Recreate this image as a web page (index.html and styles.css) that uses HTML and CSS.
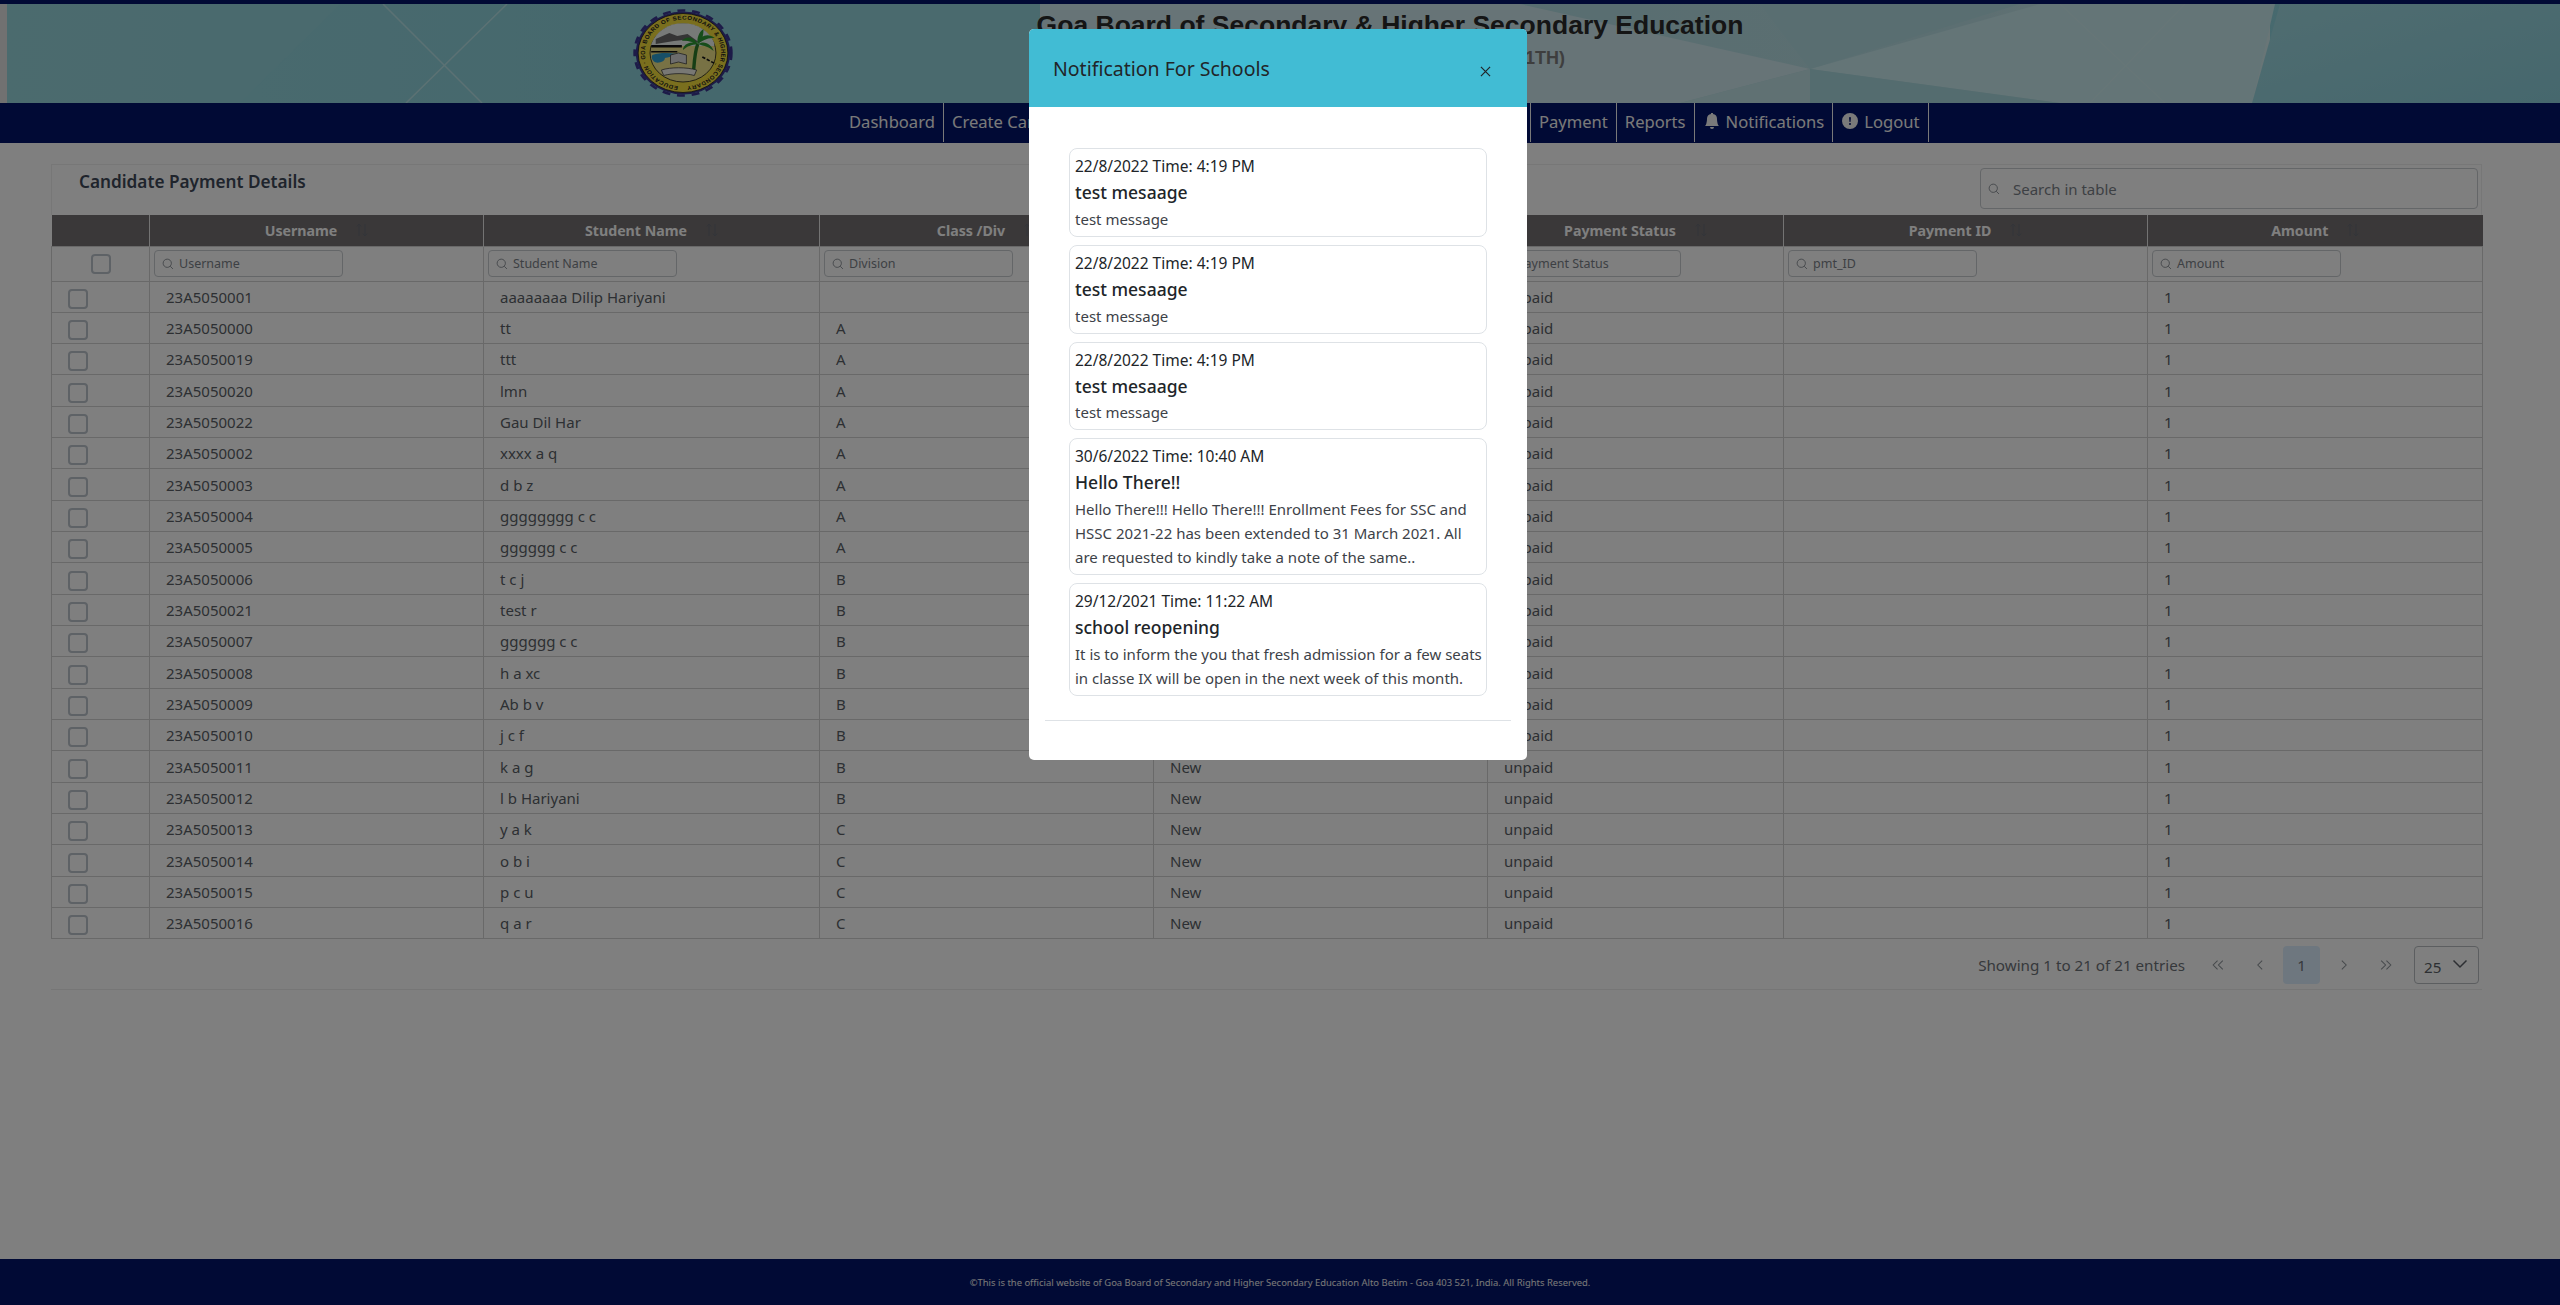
FILE: index.html
```html
<!DOCTYPE html>
<html lang="en">
<head>
<meta charset="utf-8">
<title>Candidate Payment Details</title>
<link rel="stylesheet" href="styles.css">
</head>
<body>
<svg class="defs" aria-hidden="true">
  <symbol id="i-search" viewBox="0 0 16 16"><circle cx="7" cy="7" r="5.5" fill="none" stroke="currentColor" stroke-width="1.1"/><path d="M11 11l3.6 3.6" stroke="currentColor" stroke-width="1.1" fill="none"/></symbol>
  <symbol id="i-sort" viewBox="0 0 12 14"><path d="M3 13V1M3 1L.8 3.4M3 1l2.2 2.4M9 1v12M9 13l-2.2-2.4M9 13l2.2-2.4" stroke="#666a74" stroke-width="1" fill="none"/></symbol>
</svg>
<header class="site-head">
  <svg class="head-bg" viewBox="0 0 2560 99" preserveAspectRatio="none" aria-hidden="true">
    <defs>
      <linearGradient id="g1" x1="0" x2="1" y1="0" y2="0"><stop offset="0" stop-color="#96d6de"/><stop offset=".3" stop-color="#8ad0da"/><stop offset="1" stop-color="#90d4de"/></linearGradient>
      <linearGradient id="g2" x1="0" x2="1" y1="0" y2="0"><stop offset="0" stop-color="#a8dbe0"/><stop offset=".75" stop-color="#b9dee4"/><stop offset="1" stop-color="#d2ecee"/></linearGradient>
      <linearGradient id="g3" x1="0" x2="1" y1="0" y2="1"><stop offset="0" stop-color="#a0dae2"/><stop offset="1" stop-color="#8ccfdb"/></linearGradient>
    </defs>
    <rect width="2560" height="99" fill="url(#g1)"/>
    <polygon points="0,0 340,0 240,99 0,99" fill="#9cd7de" opacity=".35"/>
    <polygon points="790,0 1040,0 1040,99 790,99" fill="#a6dade" opacity=".4"/>
    <rect x="1040" width="1230" height="99" fill="url(#g2)"/>
    <polygon points="1810,65 1520,0 1040,0 1040,99 1680,99" fill="#cfe8ee"/>
    <polygon points="1810,65 2040,0 2275,0 2252,99 2060,99" fill="#c8eaee"/>
    <polygon points="1760,0 2020,0 1810,65" fill="#b2dde2"/>
    <polygon points="1810,65 2060,99 1810,99" fill="#a8d8de"/>
    <polygon points="1810,65 1680,99 1810,99" fill="#c0e2e6"/>
    <polygon points="2280,0 2560,0 2560,99 2252,99" fill="url(#g3)"/>
    <g stroke="#d2eff0" stroke-width="1.5" opacity=".6">
      <line x1="383" y1="0" x2="482" y2="99"/>
      <line x1="507" y1="0" x2="406" y2="99"/>
      <line x1="2060" y1="0" x2="2165" y2="99"/>
      <line x1="2185" y1="0" x2="2090" y2="99"/>
    </g>
    <rect width="7" height="99" fill="#e2e2e2"/>
  </svg>
  <svg class="logo" viewBox="12 0 176 176" preserveAspectRatio="none" aria-hidden="true">
    <defs><path id="ring" d="M100 155A67 67 0 1 1 100.1 155"/></defs>
    <circle cx="100" cy="88" r="83" fill="#3a3690"/>
    <circle cx="100" cy="88" r="85" fill="none" stroke="#3a3690" stroke-width="5" stroke-dasharray="14 12"/>
    <circle cx="100" cy="88" r="79" fill="#f4de3c" stroke="#1b1b1b" stroke-width="1.500"/>
    <circle cx="100" cy="88" r="58" fill="#f0e48a" stroke="#1b1b1b" stroke-width="1.500"/>
    <path d="M45 68A58 58 0 0 1 155 68V74H43Z" fill="#eef4f0"/>
    <path d="M52 60l24-12 14 6 18-4 22 18-30-6-16 2-32 6Z" fill="#6a6a6a"/>
    <path d="M44 72h54v5H44zM44 84h46v3H44z" fill="#141414"/>
    <path d="M46 92c16-6 30-4 44-2-6 6-16 6-22 8 2 6-14 14-20 6-3-4-4-8-2-12Z" fill="#2f9fd0"/>
    <path d="M118 132c2-24 2-44 8-62" stroke="#2f7d2a" stroke-width="6" fill="none"/>
    <path d="M126 70c-10-18-22-14-28-6 8-2 14 0 28 6ZM126 70c-14-8-26 2-26 12 8-8 14-10 26-12ZM126 70c4-18 18-22 30-12-12 0-18 2-30 12ZM126 70c12-8 24 0 28 14-8-8-16-10-28-14ZM126 70c-2-12 2-24 10-30 0 10 0 18-10 30Z" fill="#2f9a34"/>
    <path d="M134 96l24 14" stroke="#141414" stroke-width="3" stroke-dasharray="6 3"/>
    <path d="M78 110l0-18 14-4 14 4 0 18-14-4Z" fill="#d8d8d8" stroke="#444" stroke-width="1.500"/>
    <path d="M62 122c16-6 44-6 62 0l-4 11c-16-5-38-5-54 0Z" fill="#f0f0e8" stroke="#444" stroke-width="1.500"/>
    <text class="logo-text"><textPath href="#ring" startOffset="2%" textLength="405">EDUCATION · GOA BOARD OF SECONDARY &amp; HIGHER SECONDARY</textPath></text>
  </svg>
  <div class="head-text">
    <h1 class="head-title">Goa Board of Secondary &amp; Higher Secondary Education</h1>
    <p class="head-sub">Online Enrollment Portal (9TH &amp; 11TH)</p>
  </div>
</header>
<nav class="main-nav">
  <a class="nav-item">Dashboard</a>
  <a class="nav-item nav-wide">Create Candidate</a>
  <a class="nav-item">Payment</a>
  <a class="nav-item">Reports</a>
  <a class="nav-item"><svg class="nav-ico" viewBox="0 0 16 16"><path d="M8 16a2 2 0 0 0 2-2H6a2 2 0 0 0 2 2Zm.9-15a1 1 0 1 0-1.8 0A5 5 0 0 0 3 6c0 1.1-.5 6-2 7h14c-1.500-1-2-5.900-2-7a5 5 0 0 0-4.100-5Z" fill="currentColor"/></svg>Notifications</a>
  <a class="nav-item"><svg class="nav-ico" viewBox="0 0 16 16"><path d="M16 8A8 8 0 1 1 0 8a8 8 0 0 1 16 0ZM8 4a.9.9 0 0 0-.9 1l.35 3.500a.55.55 0 0 0 1.100 0L8.900 5A.9.9 0 0 0 8 4Zm0 6a1 1 0 1 0 0 2 1 1 0 0 0 0-2Z" fill="currentColor" fill-rule="evenodd"/></svg>Logout</a>
</nav>
<main class="content">
  <section class="panel">
    <div class="toolbar">
      <h2 class="panel-title">Candidate Payment Details</h2>
      <label class="search"><svg class="ico"><use href="#i-search"/></svg><span>Search in table</span></label>
    </div>
    <table class="grid">
      <colgroup><col class="c1"><col class="c2"><col class="c3"><col class="c4"><col class="c5"><col class="c6"><col class="c7"><col class="c8"></colgroup>
      <thead>
        <tr class="head-row">
          <th></th>
          <th><span class="th-in">Username<svg class="sort"><use href="#i-sort"/></svg></span></th>
          <th><span class="th-in">Student Name<svg class="sort"><use href="#i-sort"/></svg></span></th>
          <th><span class="th-in">Class /Div<svg class="sort"><use href="#i-sort"/></svg></span></th>
          <th><span class="th-in">Type<svg class="sort"><use href="#i-sort"/></svg></span></th>
          <th><span class="th-in">Payment Status<svg class="sort"><use href="#i-sort"/></svg></span></th>
          <th><span class="th-in">Payment ID<svg class="sort"><use href="#i-sort"/></svg></span></th>
          <th><span class="th-in">Amount<svg class="sort"><use href="#i-sort"/></svg></span></th>
        </tr>
        <tr class="filter-row">
          <td class="check-head"><span class="check"></span></td>
          <td><label class="filter"><svg class="ico"><use href="#i-search"/></svg>Username</label></td>
          <td><label class="filter"><svg class="ico"><use href="#i-search"/></svg>Student Name</label></td>
          <td><label class="filter"><svg class="ico"><use href="#i-search"/></svg>Division</label></td>
          <td><label class="filter"><svg class="ico"><use href="#i-search"/></svg>Type</label></td>
          <td><label class="filter"><svg class="ico"><use href="#i-search"/></svg>Payment Status</label></td>
          <td><label class="filter"><svg class="ico"><use href="#i-search"/></svg>pmt_ID</label></td>
          <td><label class="filter"><svg class="ico"><use href="#i-search"/></svg>Amount</label></td>
        </tr>
      </thead>
      <tbody>
        <tr><td><span class="check"></span></td><td>23A5050001</td><td>aaaaaaaa Dilip Hariyani</td><td></td><td>New</td><td>unpaid</td><td></td><td>1</td></tr>
        <tr><td><span class="check"></span></td><td>23A5050000</td><td>tt</td><td>A</td><td>New</td><td>unpaid</td><td></td><td>1</td></tr>
        <tr><td><span class="check"></span></td><td>23A5050019</td><td>ttt</td><td>A</td><td>New</td><td>unpaid</td><td></td><td>1</td></tr>
        <tr><td><span class="check"></span></td><td>23A5050020</td><td>lmn</td><td>A</td><td>New</td><td>unpaid</td><td></td><td>1</td></tr>
        <tr><td><span class="check"></span></td><td>23A5050022</td><td>Gau Dil Har</td><td>A</td><td>New</td><td>unpaid</td><td></td><td>1</td></tr>
        <tr><td><span class="check"></span></td><td>23A5050002</td><td>xxxx a q</td><td>A</td><td>New</td><td>unpaid</td><td></td><td>1</td></tr>
        <tr><td><span class="check"></span></td><td>23A5050003</td><td>d b z</td><td>A</td><td>New</td><td>unpaid</td><td></td><td>1</td></tr>
        <tr><td><span class="check"></span></td><td>23A5050004</td><td>gggggggg c c</td><td>A</td><td>New</td><td>unpaid</td><td></td><td>1</td></tr>
        <tr><td><span class="check"></span></td><td>23A5050005</td><td>gggggg c c</td><td>A</td><td>New</td><td>unpaid</td><td></td><td>1</td></tr>
        <tr><td><span class="check"></span></td><td>23A5050006</td><td>t c j</td><td>B</td><td>New</td><td>unpaid</td><td></td><td>1</td></tr>
        <tr><td><span class="check"></span></td><td>23A5050021</td><td>test r</td><td>B</td><td>New</td><td>unpaid</td><td></td><td>1</td></tr>
        <tr><td><span class="check"></span></td><td>23A5050007</td><td>gggggg c c</td><td>B</td><td>New</td><td>unpaid</td><td></td><td>1</td></tr>
        <tr><td><span class="check"></span></td><td>23A5050008</td><td>h a xc</td><td>B</td><td>New</td><td>unpaid</td><td></td><td>1</td></tr>
        <tr><td><span class="check"></span></td><td>23A5050009</td><td>Ab b v</td><td>B</td><td>New</td><td>unpaid</td><td></td><td>1</td></tr>
        <tr><td><span class="check"></span></td><td>23A5050010</td><td>j c f</td><td>B</td><td>New</td><td>unpaid</td><td></td><td>1</td></tr>
        <tr><td><span class="check"></span></td><td>23A5050011</td><td>k a g</td><td>B</td><td>New</td><td>unpaid</td><td></td><td>1</td></tr>
        <tr><td><span class="check"></span></td><td>23A5050012</td><td>l b Hariyani</td><td>B</td><td>New</td><td>unpaid</td><td></td><td>1</td></tr>
        <tr><td><span class="check"></span></td><td>23A5050013</td><td>y a k</td><td>C</td><td>New</td><td>unpaid</td><td></td><td>1</td></tr>
        <tr><td><span class="check"></span></td><td>23A5050014</td><td>o b i</td><td>C</td><td>New</td><td>unpaid</td><td></td><td>1</td></tr>
        <tr><td><span class="check"></span></td><td>23A5050015</td><td>p c u</td><td>C</td><td>New</td><td>unpaid</td><td></td><td>1</td></tr>
        <tr><td><span class="check"></span></td><td>23A5050016</td><td>q a r</td><td>C</td><td>New</td><td>unpaid</td><td></td><td>1</td></tr>
      </tbody>
    </table>
    <div class="pager">
      <span class="pager-info">Showing 1 to 21 of 21 entries</span>
      <a class="page-btn"><svg class="page-ico" viewBox="0 0 16 16"><path d="M7.500 3L2.500 8l5 5M13.500 3l-5 5 5 5"/></svg></a>
      <a class="page-btn"><svg class="page-ico" viewBox="0 0 16 16"><path d="M10.500 3l-5 5 5 5"/></svg></a>
      <a class="page-btn page-on">1</a>
      <a class="page-btn"><svg class="page-ico" viewBox="0 0 16 16"><path d="M5.500 3l5 5-5 5"/></svg></a>
      <a class="page-btn"><svg class="page-ico" viewBox="0 0 16 16"><path d="M2.500 3l5 5-5 5M8.500 3l5 5-5 5"/></svg></a>
      <span class="size"><span class="size-val">25</span><svg class="size-ico" viewBox="0 0 16 10"><path d="M1.500 1.500L8 8l6.500-6.500"/></svg></span>
    </div>
  </section>
</main>
<footer class="site-foot">©This is the official website of Goa Board of Secondary and Higher Secondary Education Alto Betim - Goa 403 521, India. All Rights Reserved.</footer>

<div class="backdrop"></div>
<div class="modal">
  <div class="modal-head">
    <h3 class="modal-title">Notification For Schools</h3>
    <svg class="modal-close" viewBox="0 0 12 12"><path d="M1 1l10 10M11 1L1 11"/></svg>
  </div>
  <div class="modal-body">
    <article class="note"><div class="note-date">22/8/2022 Time: 4:19 PM</div><div class="note-title">test mesaage</div><div class="note-text">test message</div></article>
    <article class="note"><div class="note-date">22/8/2022 Time: 4:19 PM</div><div class="note-title">test mesaage</div><div class="note-text">test message</div></article>
    <article class="note"><div class="note-date">22/8/2022 Time: 4:19 PM</div><div class="note-title">test mesaage</div><div class="note-text">test message</div></article>
    <article class="note"><div class="note-date">30/6/2022 Time: 10:40 AM</div><div class="note-title">Hello There!!</div><div class="note-text">Hello There!!! Hello There!!! Enrollment Fees for SSC and<br>HSSC 2021-22 has been extended to 31 March 2021. All<br>are requested to kindly take a note of the same..</div></article>
    <article class="note"><div class="note-date">29/12/2021 Time: 11:22 AM</div><div class="note-title">school reopening</div><div class="note-text">It is to inform the you that fresh admission for a few seats<br>in classe IX will be open in the next week of this month.</div></article>
  </div>
  <div class="modal-foot"></div>
</div>
</body>
</html>
```
FILE: styles.css
```css
* { box-sizing: border-box; }
html, body { height: 100%; }
body {
  margin: 0;
  display: flex;
  flex-direction: column;
  background: #fff;
  color: #5a5f66;
  font-family: "Noto Sans", "Open Sans", sans-serif;
  font-size: 15px;
  overflow: hidden;
}
.defs { width: 0; height: 0; position: absolute; }

.site-head {
  position: relative;
  height: 103px;
  flex: none;
  border-top: 4px solid #03146a;
  overflow: hidden;
}
.head-bg { position: absolute; left: 0; top: 0; width: 100%; height: 100%; }
.logo { position: absolute; left: 633px; top: 5px; width: 100px; height: 88px; }
.logo-text { font: 700 11px "Liberation Sans", sans-serif; fill: #1b1b1b; }
.head-text {
  position: relative;
  margin-left: 1035px;
  width: 710px;
  text-align: center;
}
.head-title {
  margin: 6px 0 0;
  font: 700 26.500px/30px "Liberation Sans", Arial, sans-serif;
  color: #2a2a2a;
  white-space: nowrap;
}
.head-sub {
  margin: 7px 0 0;
  padding-right: 180px;
  text-align: right;
  font: 700 18px/22px "Liberation Sans", Arial, sans-serif;
  color: #7d7d7d;
  white-space: nowrap;
}

.main-nav {
  flex: none;
  height: 40px;
  display: flex;
  padding-left: 841px;
  background: #03146a;
}
.nav-item {
  display: flex;
  align-items: center;
  height: 39px;
  padding: 0 8px 3px;
  border-right: 1px solid #f3f3f3;
  color: #f4f4f4;
  font-size: 16.600px;
  white-space: nowrap;
}
.nav-wide { width: 587px; }
.nav-ico { width: 16px; height: 16px; margin: 0 6px 0 1px; flex: none; }

.content { flex: 1; min-height: 0; }
.panel {
  margin: 21px 78px 0 51px;
  padding-bottom: 5px;
  border-bottom: 1px solid #ececec;
}
.toolbar {
  height: 51px;
  display: flex;
  justify-content: space-between;
  padding: 3px 3px 0 27px;
  border: 1px solid #efefef;
  border-bottom: 0;
}
.panel-title {
  margin: 0;
  font-size: 17.200px;
  line-height: 28px;
  font-weight: 600;
  color: #3e4958;
}
.search {
  width: 498px;
  height: 41px;
  display: flex;
  align-items: center;
  padding-left: 7px;
  border: 1px solid #c8ccd0;
  border-radius: 4px;
  font-size: 15px;
  color: #7b8188;
}
.search .ico { margin-right: 13px; }
.ico { width: 12px; height: 12px; flex: none; color: #7b8188; }

.grid {
  width: 2431px;
  table-layout: fixed;
  border-collapse: collapse;
}
.c1 { width: 98px; } .c2 { width: 334px; } .c3 { width: 336px; } .c4 { width: 334px; }
.c5 { width: 334px; } .c6 { width: 296px; } .c7 { width: 364px; } .c8 { width: 335px; }
.grid td {
  height: 31.330px;
  padding: 0 16px;
  border: 1px solid #d3d3d3;
  white-space: nowrap;
  overflow: hidden;
}
.grid td:first-child { padding: 0 0 0 16px; }
.head-row th {
  height: 31px;
  padding: 0;
  background: #747072;
  border-left: 1px solid #e6e6e6;
  color: #fff;
  font-size: 14.200px;
  font-weight: 700;
}
.head-row th:first-child { border-left: 0; }
.th-in { display: inline-flex; align-items: center; }
.sort { width: 12px; height: 14px; margin-left: 19px; }
.grid .filter-row td { height: 35px; padding: 0 0 0 4px; }
.grid .filter-row .check-head { padding: 0; text-align: center; }
.filter {
  width: 189px;
  height: 27px;
  display: flex;
  align-items: center;
  padding-left: 7px;
  border: 1px solid #c8ccd0;
  border-radius: 4px;
  font-size: 12.500px;
  color: #7b8188;
}
.filter .ico { margin-right: 5px; }
.check {
  display: block;
  width: 20px;
  height: 20px;
  margin-top: 4px;
  border: 2px solid #bcc4cc;
  border-radius: 4px;
}
.check-head .check { display: inline-block; margin-top: 0; vertical-align: middle; }

.pager {
  display: flex;
  align-items: center;
  justify-content: flex-end;
  gap: 5px;
  padding: 7px 3px 0 0;
  font-size: 15.200px;
}
.pager-info { margin-right: 9px; color: #6d7278; }
.page-btn {
  width: 37px;
  height: 38px;
  display: flex;
  align-items: center;
  justify-content: center;
  border-radius: 4px;
  color: #6d7278;
}
.page-on { background: #dceeff; }
.page-ico { width: 14px; height: 14px; fill: none; stroke: #8d9399; stroke-width: 1.200; }
.size {
  width: 65px;
  height: 38px;
  margin-left: 5px;
  display: flex;
  align-items: center;
  justify-content: space-between;
  padding: 3px 10px 0 9px;
  border: 1px solid #b8bcc0;
  border-radius: 4px;
}
.size-ico { width: 16px; height: 10px; margin-top: -6px; fill: none; stroke: #5a5f66; stroke-width: 1.500; }

.site-foot {
  flex: none;
  height: 46px;
  display: flex;
  align-items: center;
  justify-content: center;
  background: #03146a;
  color: #f0f0f0;
  font-size: 9.450px;
}

.backdrop {
  position: fixed;
  left: 0; top: 0; right: 0; bottom: 0;
  background: rgba(0, 0, 0, .5);
}
.modal {
  position: fixed;
  left: 1029px;
  top: 29px;
  width: 498px;
  background: #fff;
  border-radius: 5px;
  overflow: hidden;
  color: #212529;
}
.modal-head {
  height: 78px;
  display: flex;
  align-items: center;
  justify-content: space-between;
  padding: 0 36px 0 24px;
  background: #41bcd4;
}
.modal-title { margin: 0; font-size: 19.500px; font-weight: 400; color: #212529; }
.modal-close { width: 11px; height: 11px; fill: none; stroke: #212529; stroke-width: 1.300; margin-top: 6px; }
.modal-body {
  padding: 41px 40px 24px;
  display: flex;
  flex-direction: column;
  gap: 8px;
}
.note {
  padding: 5px 5px 5px;
  border: 1px solid #dee2e6;
  border-radius: 8px;
}
.note-date { font-size: 15.500px; line-height: 24px; color: #212529; }
.note-title { font-size: 17.500px; line-height: 28.800px; font-weight: 500; color: #212529; }
.note-text { font-size: 15px; line-height: 24px; color: #3d4248; white-space: nowrap; }
.modal-foot {
  height: 40px;
  margin: 0 16px;
  border-top: 1px solid #dee2e6;
}
```
